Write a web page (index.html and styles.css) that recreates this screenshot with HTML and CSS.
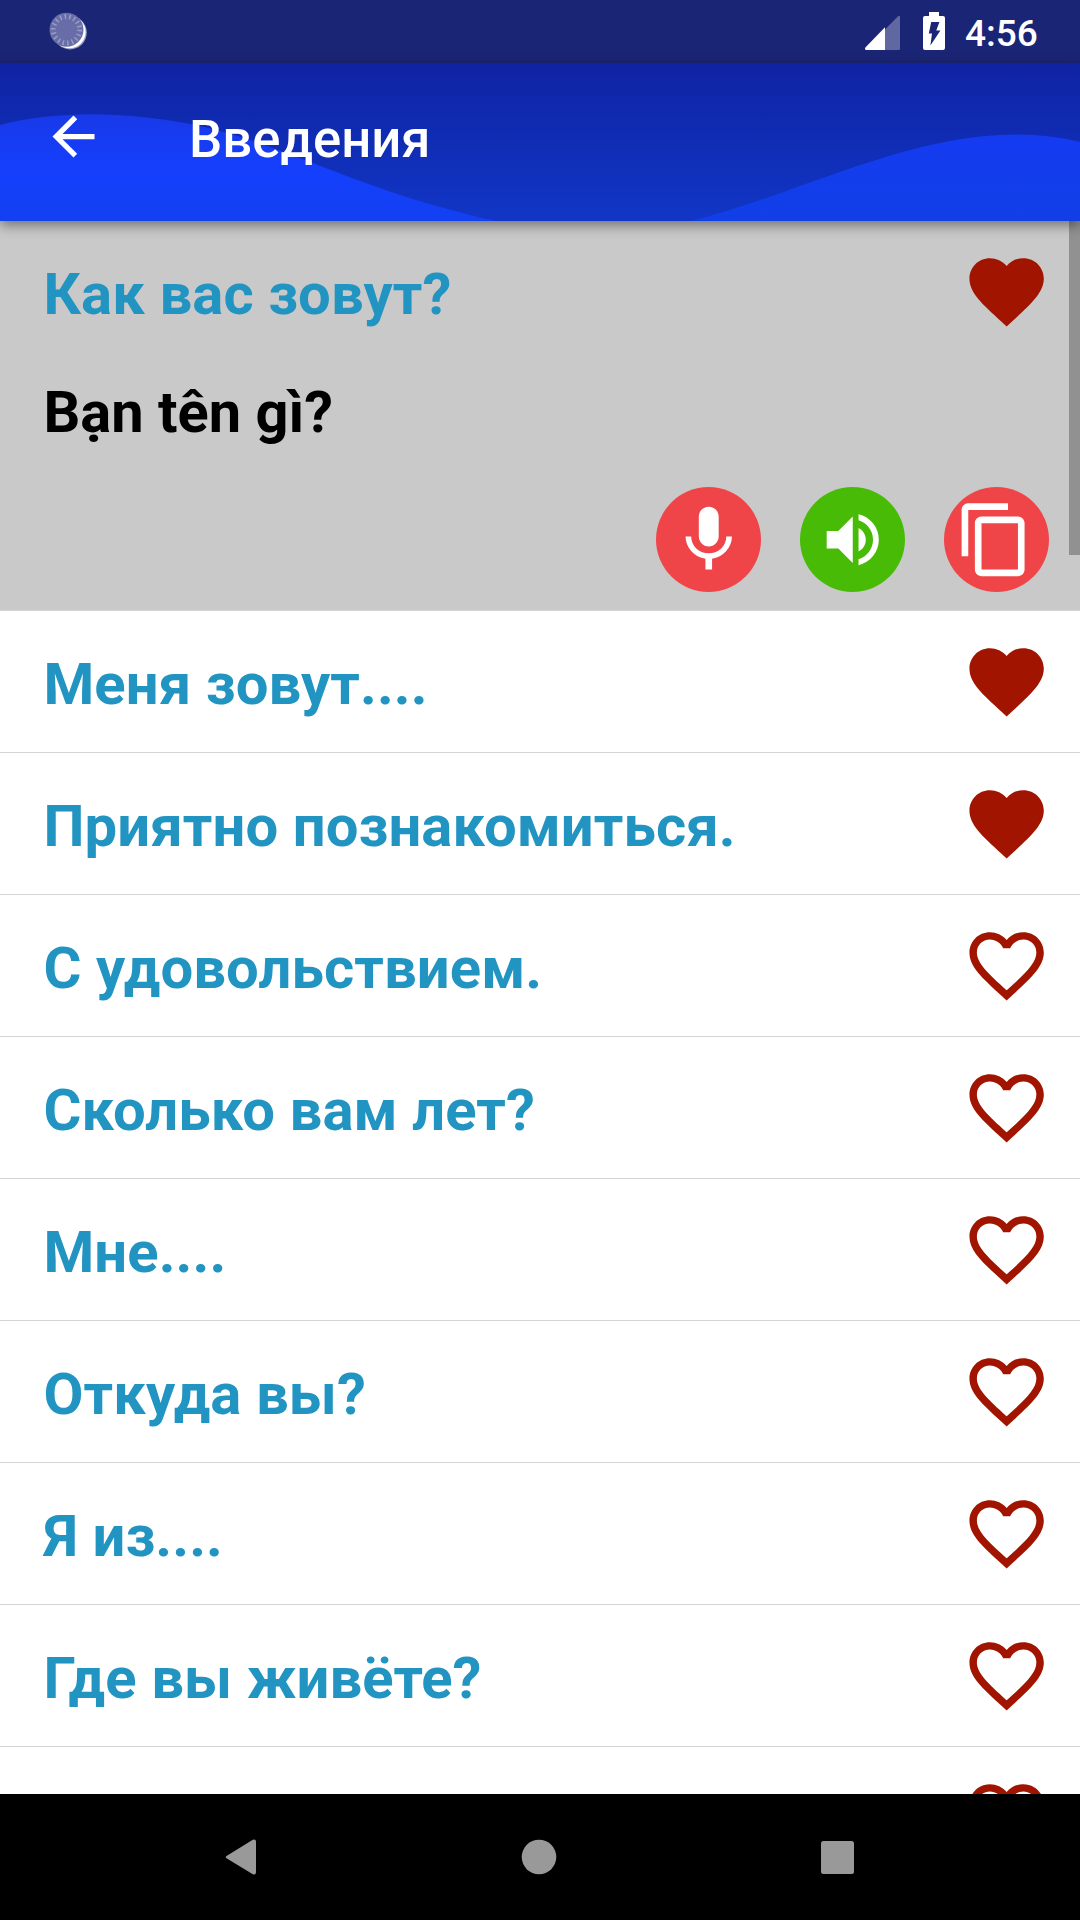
FILE: index.html
```html
<!DOCTYPE html>
<html lang="ru">
<head>
<meta charset="utf-8">
<title>Введения</title>
<link rel="stylesheet" href="styles.css">
</head>
<body>
<svg class="defs" aria-hidden="true">
  <symbol id="heart" viewBox="0 0 24 24"><path d="M12 21.35l-1.45-1.32C5.4 15.36 2 12.28 2 8.5 2 5.42 4.42 3 7.5 3c1.74 0 3.41.81 4.5 2.09C13.09 3.81 14.76 3 16.5 3 19.58 3 22 5.42 22 8.5c0 3.78-3.4 6.86-8.55 11.54L12 21.35z"/></symbol>
  <symbol id="heart-outline" viewBox="0 0 24 24"><path d="M16.5 3c-1.74 0-3.41.81-4.5 2.09C10.91 3.81 9.24 3 7.5 3 4.42 3 2 5.42 2 8.5c0 3.78 3.4 6.86 8.55 11.54L12 21.35l1.45-1.32C18.6 15.36 22 12.28 22 8.5 22 5.42 19.58 3 16.5 3zm-4.4 15.55l-.1.1-.1-.1C7.14 14.24 4 11.39 4 8.5 4 6.5 5.5 5 7.5 5c1.54 0 3.04.99 3.57 2.36h1.87C13.46 5.99 14.96 5 16.5 5c2 0 3.5 1.5 3.5 3.5 0 2.89-3.14 5.74-7.9 10.05z"/></symbol>
</svg>
<div class="screen">
  <header class="status">
    <svg class="status-sync" viewBox="0 0 40 40">
      <circle cx="22" cy="22.6" r="16.8" fill="#9a9dc6"/>
      <circle cx="21.4" cy="22" r="16.2" fill="#fff"/>
      <circle cx="18.5" cy="19.8" r="17" fill="#686da7"/>
      <circle cx="18.5" cy="19.8" r="13.2" fill="none" stroke="#989cc5" stroke-width="5" stroke-dasharray="1.5 3.108"/>
    </svg>
    <svg class="status-signal" viewBox="0 0 35 35">
      <path d="M20 14.5L33 1.2Q35 0 35 2V33.500Q35 35 33.500 35H20z" fill="#6167a0"/>
      <path d="M20 12.300V35H1.500Q-.8 34.600.4 32.500z" fill="#fff"/>
    </svg>
    <svg class="status-battery" viewBox="0 0 22 38">
      <path d="M6 0H16V4H20Q22 4 22 6V36Q22 38 20 38H2Q0 38 0 36V6Q0 4 2 4H6z" fill="#fff"/>
      <path d="M8.200 10H16.400L13.300 18.600H17.400L7.400 33.600L9 21.600H5.800z" fill="#1b2575"/>
    </svg>
    <span class="clock">4:56</span>
  </header>

  <div class="appbar">
    <svg class="appbar-wave" viewBox="0 63 1080 158" preserveAspectRatio="none">
      <defs>
        <linearGradient id="deep" x1="0" y1="0" x2="0" y2="1"><stop offset="0" stop-color="#0f23a3"/><stop offset="1" stop-color="#1136c6"/></linearGradient>
        <linearGradient id="left" gradientUnits="userSpaceOnUse" x1="0" y1="114" x2="0" y2="221"><stop offset="0" stop-color="#1839e8"/><stop offset=".5" stop-color="#153ffd"/><stop offset="1" stop-color="#1340f1"/></linearGradient>
        <linearGradient id="right" gradientUnits="userSpaceOnUse" x1="0" y1="134" x2="0" y2="221"><stop offset="0" stop-color="#153bf1"/><stop offset="1" stop-color="#113fe6"/></linearGradient>
      </defs>
      <path d="M0 63H1080V221H0z" fill="url(#deep)"/>
      <path d="M0 125C60 110 125 112 190 124C285 143 350 188 495 221H0z" fill="url(#left)"/>
      <path d="M691 221C805 192 905 134.500 1018 134.500Q1050 134.500 1080 142V221z" fill="url(#right)"/>
    </svg>
    <svg class="back" viewBox="0 0 24 24"><path d="M20 11H7.830l5.590-5.590L12 4l-8 8 8 8 1.410-1.410L7.830 13H20v-2z"/></svg>
    <h1 class="title">Введения</h1>
  </div>

  <main class="list">
    <section class="row open">
      <div class="head"><span class="phrase">Как вас зовут?</span><svg class="fav"><use href="#heart"/></svg></div>
      <p class="translation" lang="vi">Bạn tên gì?</p>
      <div class="actions">
        <span class="btn red"><svg class="icon-lg" viewBox="0 0 24 24"><path d="M12 14c1.660 0 3-1.340 3-3V5c0-1.660-1.340-3-3-3S9 3.340 9 5v6c0 1.660 1.340 3 3 3zm5.300-3c0 3-2.540 5.100-5.300 5.100S6.700 14 6.700 11H5c0 3.410 2.720 6.230 6 6.720V21h2v-3.280c3.280-.48 6-3.300 6-6.720h-1.700z"/></svg></span>
        <span class="btn green"><svg class="icon-md" viewBox="0 0 24 24"><path d="M3 9v6h4l5 5V4L7 9H3zm13.500 3c0-1.770-1.020-3.290-2.500-4.030v8.050c1.480-.73 2.500-2.250 2.500-4.020zM14 3.230v2.060c2.890.86 5 3.540 5 6.710s-2.110 5.850-5 6.710v2.060c4.010-.91 7-4.490 7-8.770s-2.990-7.860-7-8.770z"/></svg></span>
        <span class="btn red copy"><svg class="icon-lg" viewBox="0 0 24 24"><path d="M16 1H4c-1.100 0-2 .9-2 2v14h2V3h12V1zm3 4H8c-1.100 0-2 .9-2 2v14c0 1.100.9 2 2 2h11c1.100 0 2-.9 2-2V7c0-1.100-.9-2-2-2zm0 16H8V7h11v14z"/></svg></span>
      </div>
    </section>
    <div class="row head"><span class="phrase">Меня зовут....</span><svg class="fav"><use href="#heart"/></svg></div>
    <div class="row head"><span class="phrase">Приятно познакомиться.</span><svg class="fav"><use href="#heart"/></svg></div>
    <div class="row head"><span class="phrase">С удовольствием.</span><svg class="fav"><use href="#heart-outline"/></svg></div>
    <div class="row head"><span class="phrase">Сколько вам лет?</span><svg class="fav"><use href="#heart-outline"/></svg></div>
    <div class="row head"><span class="phrase">Мне....</span><svg class="fav"><use href="#heart-outline"/></svg></div>
    <div class="row head"><span class="phrase">Откуда вы?</span><svg class="fav"><use href="#heart-outline"/></svg></div>
    <div class="row head"><span class="phrase">Я из....</span><svg class="fav"><use href="#heart-outline"/></svg></div>
    <div class="row head"><span class="phrase">Где вы живёте?</span><svg class="fav"><use href="#heart-outline"/></svg></div>
    <div class="row head"><span class="phrase"></span><svg class="fav"><use href="#heart-outline"/></svg></div>
    <div class="scrollbar"></div>
  </main>

  <nav class="navbar">
    <svg class="nav-icon" viewBox="0 0 36 36"><path d="M4.300 16.600L29.800 .8Q33 -.2 33 2.800V33.200Q33 36.200 29.800 35.200L4.300 19.800Q1.200 18.200 4.300 16.600z"/></svg>
    <svg class="nav-icon" viewBox="0 0 36 36"><circle cx="18" cy="18" r="17.300"/></svg>
    <svg class="nav-icon" viewBox="0 0 36 36"><rect x="2" y="2" width="33" height="33" rx="2.500"/></svg>
  </nav>
</div>
</body>
</html>
```

FILE: styles.css
```css
* { box-sizing: border-box; }
body { margin: 0; font-family: Roboto, "Noto Sans", sans-serif; }
svg { display: block; flex: none; }
.defs { position: absolute; width: 0; height: 0; }

.screen {
  width: 1080px;
  height: 1920px;
  display: flex;
  flex-direction: column;
  overflow: hidden;
  background: #fff;
}

.status {
  flex: none;
  height: 63px;
  padding: 0 42px 0 48px;
  display: flex;
  align-items: flex-start;
  background: #1b2575;
  color: #fff;
}
.status-sync { width: 40px; height: 40px; margin-top: 10px; margin-right: auto; }
.status-signal { width: 35px; height: 35px; margin-top: 15px; }
.status-battery { width: 22px; height: 38px; margin: 12px 20px 0 23px; }
.clock { font-size: 37px; font-weight: 500; line-height: 44px; margin-top: 12px; width: 73px; white-space: nowrap; }

.appbar {
  flex: none;
  position: relative;
  z-index: 1;
  height: 158px;
  padding: 0 42px 11px;
  display: flex;
  align-items: center;
  box-shadow: 0 4px 12px rgba(0, 0, 0, .45);
}
.appbar-wave { position: absolute; inset: 0; width: 100%; height: 100%; }
.back { position: relative; width: 63px; height: 63px; fill: #fff; }
.title {
  position: relative;
  margin: 5px 0 0 84px;
  color: #fff;
  font-size: 52.700px;
  font-weight: 500;
  line-height: 62px;
}

.list { position: relative; flex: 1; min-height: 0; overflow: hidden; }
.row { border-bottom: 1px solid #d5d5d5; }
.head {
  height: 142px;
  padding: 0 28.500px 0 43.500px;
  display: flex;
  align-items: center;
  justify-content: space-between;
}
.phrase { font-size: 58px; font-weight: 700; line-height: 68px; letter-spacing: .09px; color: #2194c2; padding-top: 4px; }
.fav { width: 89.250px; height: 89.250px; fill: #a01400; }

.open { height: 390px; background: #c9c9c9; }
.open .head { height: 141px; }
.translation {
  margin: 16px 0 0 43.500px;
  font-size: 57.750px;
  font-weight: 700;
  line-height: 68px;
  color: #000;
}
.actions { display: flex; justify-content: flex-end; gap: 39px; margin-top: 41px; padding-right: 31px; }
.btn {
  width: 105px;
  height: 105px;
  border-radius: 50%;
  display: flex;
  align-items: center;
  justify-content: center;
}
.btn svg { fill: #fff; }
.red { background: #ef4548; }
.green { background: #48bb06; }
.copy { padding-right: 4px; }
.icon-lg { width: 79.500px; height: 79.500px; }
.icon-md { width: 69.500px; height: 69.500px; }

.scrollbar { position: absolute; top: 0; right: 0; width: 11px; height: 334px; background: #919191; }

.navbar {
  flex: none;
  height: 126px;
  padding: 0 225px 0 223px;
  display: flex;
  align-items: center;
  justify-content: space-between;
  background: #000;
}
.nav-icon { width: 36px; height: 36px; fill: #999; }
```
